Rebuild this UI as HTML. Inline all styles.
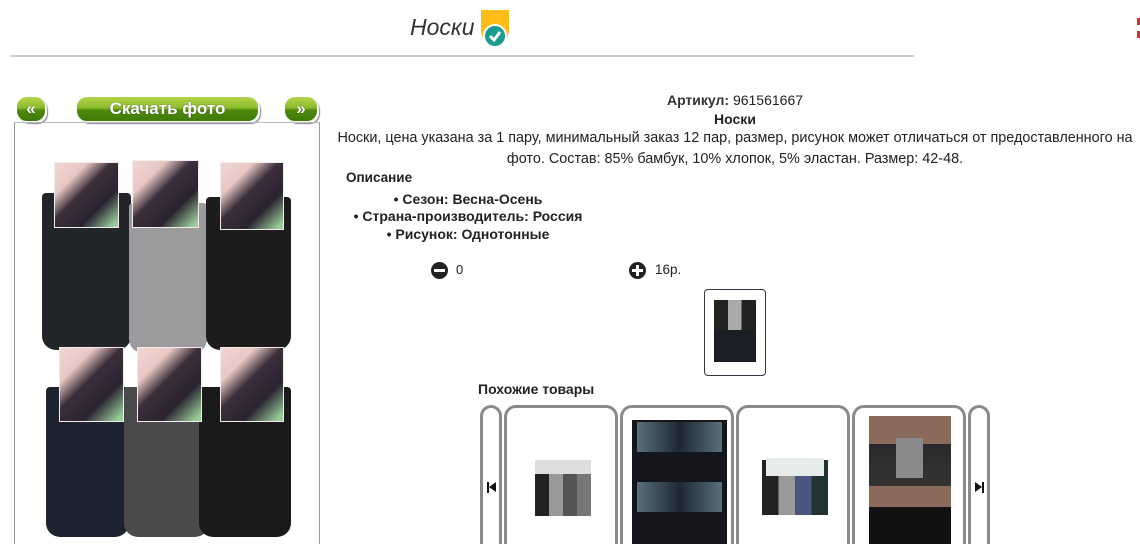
<!DOCTYPE html>
<html><head><meta charset="utf-8"><style>
*{margin:0;padding:0;box-sizing:border-box}
html,body{width:1140px;height:544px;overflow:hidden}
body{background:#fff;font-family:"Liberation Sans",Arial,sans-serif;color:#222;position:relative}
.a{position:absolute}
.btn{position:absolute;top:97px;height:24px;border-radius:10px;background:linear-gradient(#b4d44a 0%,#8cbb2a 45%,#4f8a0c 55%,#3f7a06 100%);color:#fff;font-weight:bold;text-align:center;line-height:23px;box-shadow:2px 2px 0 #fff,3px 3px 1px #888;text-shadow:0 0 1px #335;font-size:17px}
.sock{position:absolute;border-radius:4px 4px 14px 14px}
.lab{position:absolute;background:linear-gradient(135deg,#f0d7d3 0%,#e8c8c4 25%,#3a2f3a 45%,#2a2330 70%,#9c9 95%);border:1px solid #f4ecec}
.c{text-align:center;white-space:nowrap}
.card{position:absolute;top:405px;height:139px;border:3px solid #8a8a8a;border-bottom:none;border-radius:12px 12px 0 0;background:#fff;overflow:hidden}
.b{font-size:14px;font-weight:bold}
</style></head><body>
<div class="a" style="left:410px;top:14px;font-size:23px;font-style:italic;color:#333">Носки</div>
<div class="a" style="left:481px;top:10px;width:28px;height:34px;background:#fdbd16;border-radius:0 0 14px 14px"></div>
<div class="a" style="left:483px;top:24px;width:24px;height:24px;border-radius:50%;background:#1a9c8e;border:2px solid #fff"></div>
<svg class="a" style="left:486px;top:27px" width="18" height="18"><path d="M4 9 L8 13 L14 5" stroke="#fff" stroke-width="3" fill="none"/></svg>
<div class="a" style="left:11px;top:55px;width:903px;height:2px;background:#ccc"></div>
<div class="a" style="left:1137px;top:18px;width:3px;height:7px;background:#c33"></div>
<div class="a" style="left:1137px;top:31px;width:3px;height:7px;background:#c33"></div>

<div class="btn" style="left:17px;width:28px">«</div>
<div class="btn" style="left:77px;width:181px">Скачать фото</div>
<div class="btn" style="left:285px;width:32px">»</div>
<div class="a" style="left:14px;top:122px;width:306px;height:422px;border:1px solid #999;border-top:1px solid #bbb;border-bottom:none"></div>

<div class="sock" style="left:42px;top:193px;width:89px;height:157px;background:#22262b"></div>
<div class="sock" style="left:129px;top:203px;width:78px;height:150px;background:#9b9b9d"></div>
<div class="sock" style="left:206px;top:197px;width:85px;height:153px;background:#1c1c1d"></div>
<div class="sock" style="left:46px;top:387px;width:83px;height:150px;background:#1d2330"></div>
<div class="sock" style="left:124px;top:387px;width:85px;height:150px;background:#4a4a4c"></div>
<div class="sock" style="left:199px;top:387px;width:92px;height:150px;background:#1a1a1b"></div>
<div class="lab" style="left:54px;top:162px;width:65px;height:66px"></div>
<div class="lab" style="left:132px;top:160px;width:67px;height:68px"></div>
<div class="lab" style="left:220px;top:162px;width:64px;height:68px"></div>
<div class="lab" style="left:59px;top:347px;width:65px;height:75px"></div>
<div class="lab" style="left:137px;top:347px;width:65px;height:75px"></div>
<div class="lab" style="left:220px;top:347px;width:64px;height:75px"></div>

<div class="a c" style="left:330px;top:92px;width:810px;font-size:14px"><b style="color:#333">Артикул:</b> 961561667</div>
<div class="a c" style="left:330px;top:111px;width:810px;font-size:14px;font-weight:bold">Носки</div>
<div class="a c" style="left:330px;top:130px;width:810px;font-size:14.4px">Носки, цена указана за 1 пару, минимальный заказ 12 пар, размер, рисунок может отличаться от предоставленного на</div>
<div class="a c" style="left:330px;top:151px;width:810px;font-size:14.4px">фото. Состав: 85% бамбук, 10% хлопок, 5% эластан. Размер: 42-48.</div>
<div class="a b" style="left:346px;top:170px;font-size:13.5px">Описание</div>
<div class="a c b" style="left:340px;top:191px;width:256px">• Сезон: Весна-Осень</div>
<div class="a c b" style="left:340px;top:208px;width:256px">• Страна-производитель: Россия</div>
<div class="a c b" style="left:340px;top:226px;width:256px">• Рисунок: Однотонные</div>

<div class="a" style="left:431px;top:262px;width:17px;height:17px;border-radius:50%;background:#222"></div>
<div class="a" style="left:434px;top:269px;width:11px;height:3px;background:#fff"></div>
<div class="a" style="left:456px;top:262px;font-size:13px">0</div>
<div class="a" style="left:629px;top:262px;width:17px;height:17px;border-radius:50%;background:#222"></div>
<div class="a" style="left:632px;top:269px;width:11px;height:3px;background:#fff"></div>
<div class="a" style="left:636px;top:265px;width:3px;height:11px;background:#fff"></div>
<div class="a" style="left:655px;top:262px;font-size:13.5px">16р.</div>

<div class="a" style="left:704px;top:289px;width:62px;height:87px;border:1px solid #334;border-radius:4px"></div>
<div class="a" style="left:714px;top:300px;width:42px;height:62px;background:linear-gradient(90deg,#222 33%,#aaa 33%,#aaa 66%,#222 66%)"></div>
<div class="a" style="left:714px;top:330px;width:42px;height:32px;background:#1c1e26"></div>

<div class="a b" style="left:478px;top:381px">Похожие товары</div>
<div class="card" style="left:480px;width:22px"></div>
<div class="a" style="left:487px;top:482px;width:2px;height:11px;background:#111"></div>
<div class="a" style="left:489px;top:482px;width:0;height:0;border-top:5.5px solid transparent;border-bottom:5.5px solid transparent;border-right:7px solid #111"></div>
<div class="card" style="left:504px;width:114px"><div class="a" style="left:28px;top:52px;width:56px;height:56px;background:linear-gradient(90deg,#222 25%,#999 25%,#999 50%,#555 50%,#555 75%,#777 75%)"></div><div class="a" style="left:28px;top:52px;width:56px;height:14px;background:#ddd"></div></div>
<div class="card" style="left:620px;width:114px"><div class="a" style="left:9px;top:12px;width:95px;height:140px;background:#15161c"></div><div class="a" style="left:14px;top:14px;width:85px;height:30px;background:linear-gradient(90deg,#8ab 0,#234 50%,#8ab 100%);opacity:.6"></div><div class="a" style="left:14px;top:74px;width:85px;height:30px;background:linear-gradient(90deg,#8ab 0,#234 50%,#8ab 100%);opacity:.6"></div></div>
<div class="card" style="left:736px;width:114px"><div class="a" style="left:23px;top:52px;width:66px;height:55px;background:linear-gradient(90deg,#222 25%,#999 25%,#999 50%,#4a5680 50%,#4a5680 75%,#233 75%)"></div><div class="a" style="left:27px;top:50px;width:58px;height:18px;background:#e8ece8"></div></div>
<div class="card" style="left:852px;width:114px"><div class="a" style="left:14px;top:8px;width:82px;height:140px;background:linear-gradient(#8a6a5a 0,#8a6a5a 20%,#2a2a2a 20%,#333 50%,#8a6a5a 50%,#8a6a5a 65%,#111 65%)"></div><div class="a" style="left:41px;top:30px;width:27px;height:40px;background:#8a8a8c"></div></div>
<div class="card" style="left:968px;width:22px"></div>
<div class="a" style="left:975px;top:482px;width:0;height:0;border-top:5.5px solid transparent;border-bottom:5.5px solid transparent;border-left:7px solid #111"></div>
<div class="a" style="left:982px;top:482px;width:2px;height:11px;background:#111"></div>
</body></html>
